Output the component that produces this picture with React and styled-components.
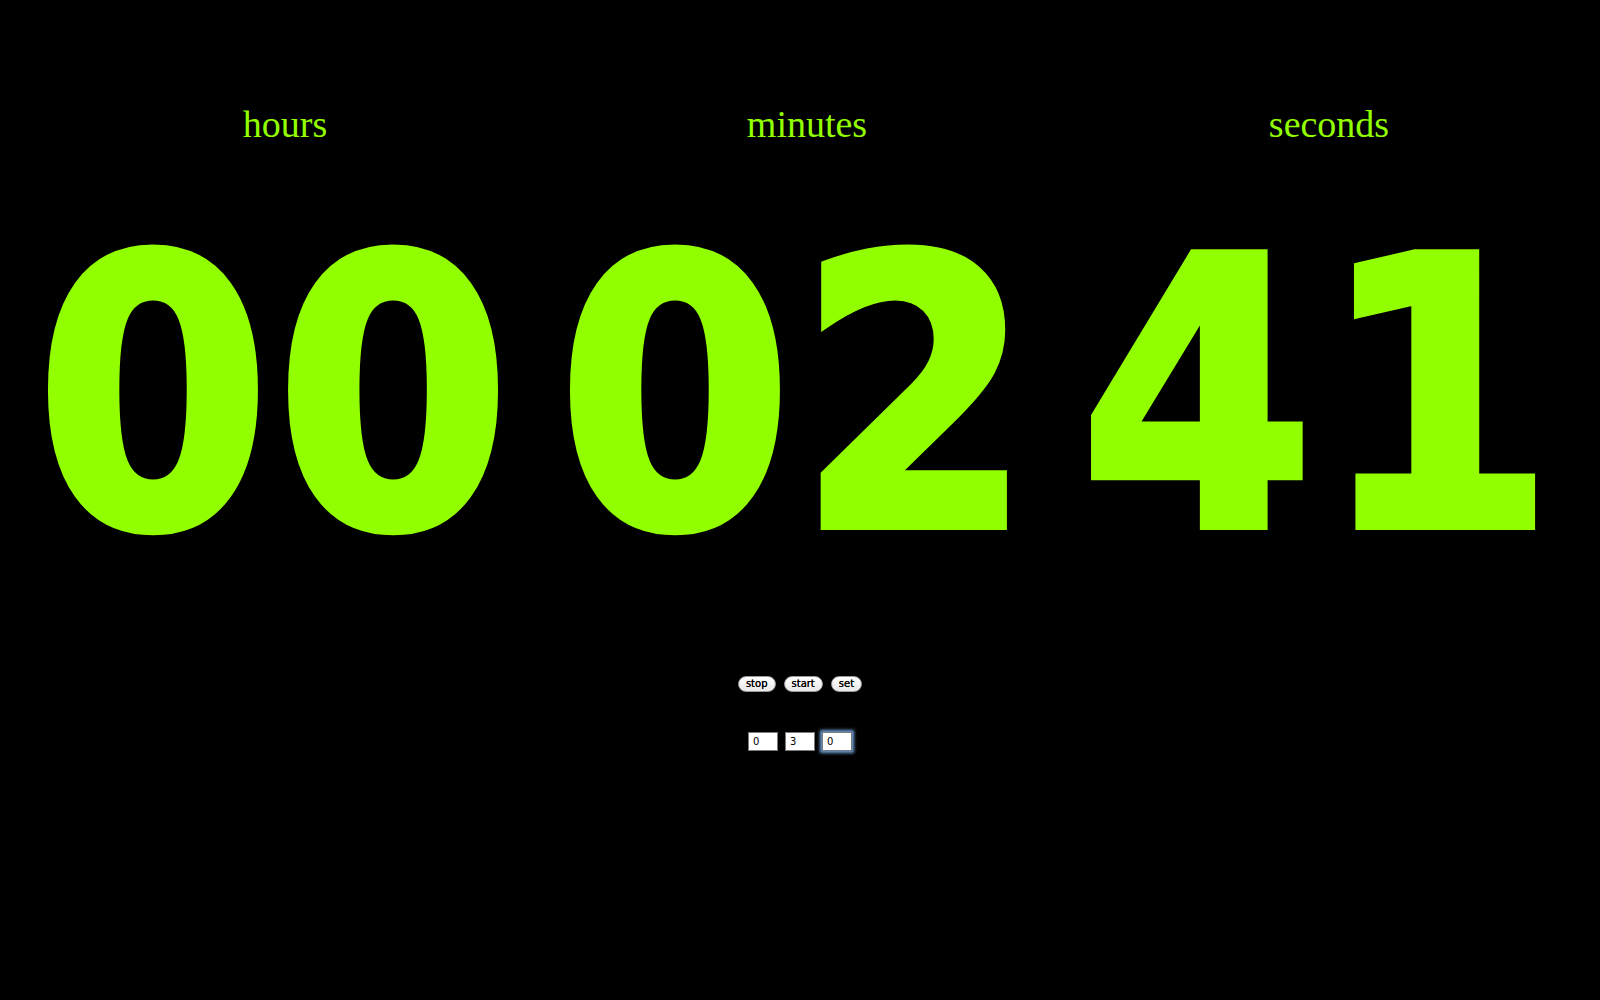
import React, { useState } from 'react'
import styled, { createGlobalStyle } from 'styled-components'

const GlobalStyle = createGlobalStyle`
  html, body {
    margin: 0;
    padding: 0;
    background: #000;
  }
`

const GREEN = '#91ff00'

function pad(n) {
  return String(n).padStart(2, '0')
}

function App() {
  const [time] = useState({ hours: 0, minutes: 2, seconds: 41 })
  const [inputs, setInputs] = useState({ h: '0', m: '3', s: '0' })

  const units = [
    { label: 'hours', value: time.hours },
    { label: 'minutes', value: time.minutes },
    { label: 'seconds', value: time.seconds },
  ]

  return (
    <Page>
      <GlobalStyle />
      <Clock>
        {units.map(u => (
          <Unit key={u.label}>
            <Label>{u.label}</Label>
            <Digits>{pad(u.value)}</Digits>
          </Unit>
        ))}
      </Clock>
      <Controls>
        <Button>stop</Button>
        <Button>start</Button>
        <Button>set</Button>
      </Controls>
      <Fields>
        <Field value={inputs.h} onChange={e => setInputs({ ...inputs, h: e.target.value })} />
        <Field value={inputs.m} onChange={e => setInputs({ ...inputs, m: e.target.value })} />
        <Field focused value={inputs.s} onChange={e => setInputs({ ...inputs, s: e.target.value })} />
      </Fields>
    </Page>
  )
}
export default App

const Page = styled.div`
  min-height: 100vh;
  background: #000;
  display: flex;
  flex-direction: column;
  align-items: center;
`

const Clock = styled.div`
  align-self: flex-start;
  display: grid;
  grid-template-columns: repeat(3, 522px);
  margin-left: 24px;
  padding-top: 102px;
`

const Unit = styled.div`
  display: flex;
  flex-direction: column;
  align-items: center;
`

const Label = styled.div`
  font-family: "Liberation Serif", "Times New Roman", serif;
  font-size: 38px;
  line-height: 44px;
  color: ${GREEN};
`

const Digits = styled.div`
  margin-top: 64px;
  margin-right: 18px;
  font-family: "DejaVu Sans Condensed", "DejaVu Sans", Verdana, sans-serif;
  font-stretch: condensed;
  font-weight: bold;
  font-size: 374px;
  line-height: 374px;
  letter-spacing: 6px;
  color: ${GREEN};
  -webkit-text-stroke: 8px ${GREEN};
  white-space: nowrap;
`

const Controls = styled.div`
  display: flex;
  gap: 8px;
  margin-top: 92px;
`

const Button = styled.button`
  height: 16px;
  padding: 0 7px;
  border: 1px solid #9a9a9a;
  border-radius: 8px;
  background: linear-gradient(#ffffff, #e8e8e8);
  font-family: "DejaVu Sans", Verdana, sans-serif;
  font-size: 10px;
  line-height: 14px;
  color: #000;
  text-shadow: 0 0 0.4px #000;
`

const Fields = styled.div`
  display: flex;
  gap: 7px;
  margin-top: 40px;
`

const Field = styled.input`
  box-sizing: border-box;
  width: 30px;
  height: 19px;
  padding: 0 4px;
  border: 1px solid #7a7a7a;
  background: #fff;
  font-family: "DejaVu Sans", Verdana, sans-serif;
  font-size: 10px;
  color: #000;
  outline: none;
  box-shadow: ${p => (p.focused ? '0 0 3px 2px #6f9fd8' : 'none')};
`
